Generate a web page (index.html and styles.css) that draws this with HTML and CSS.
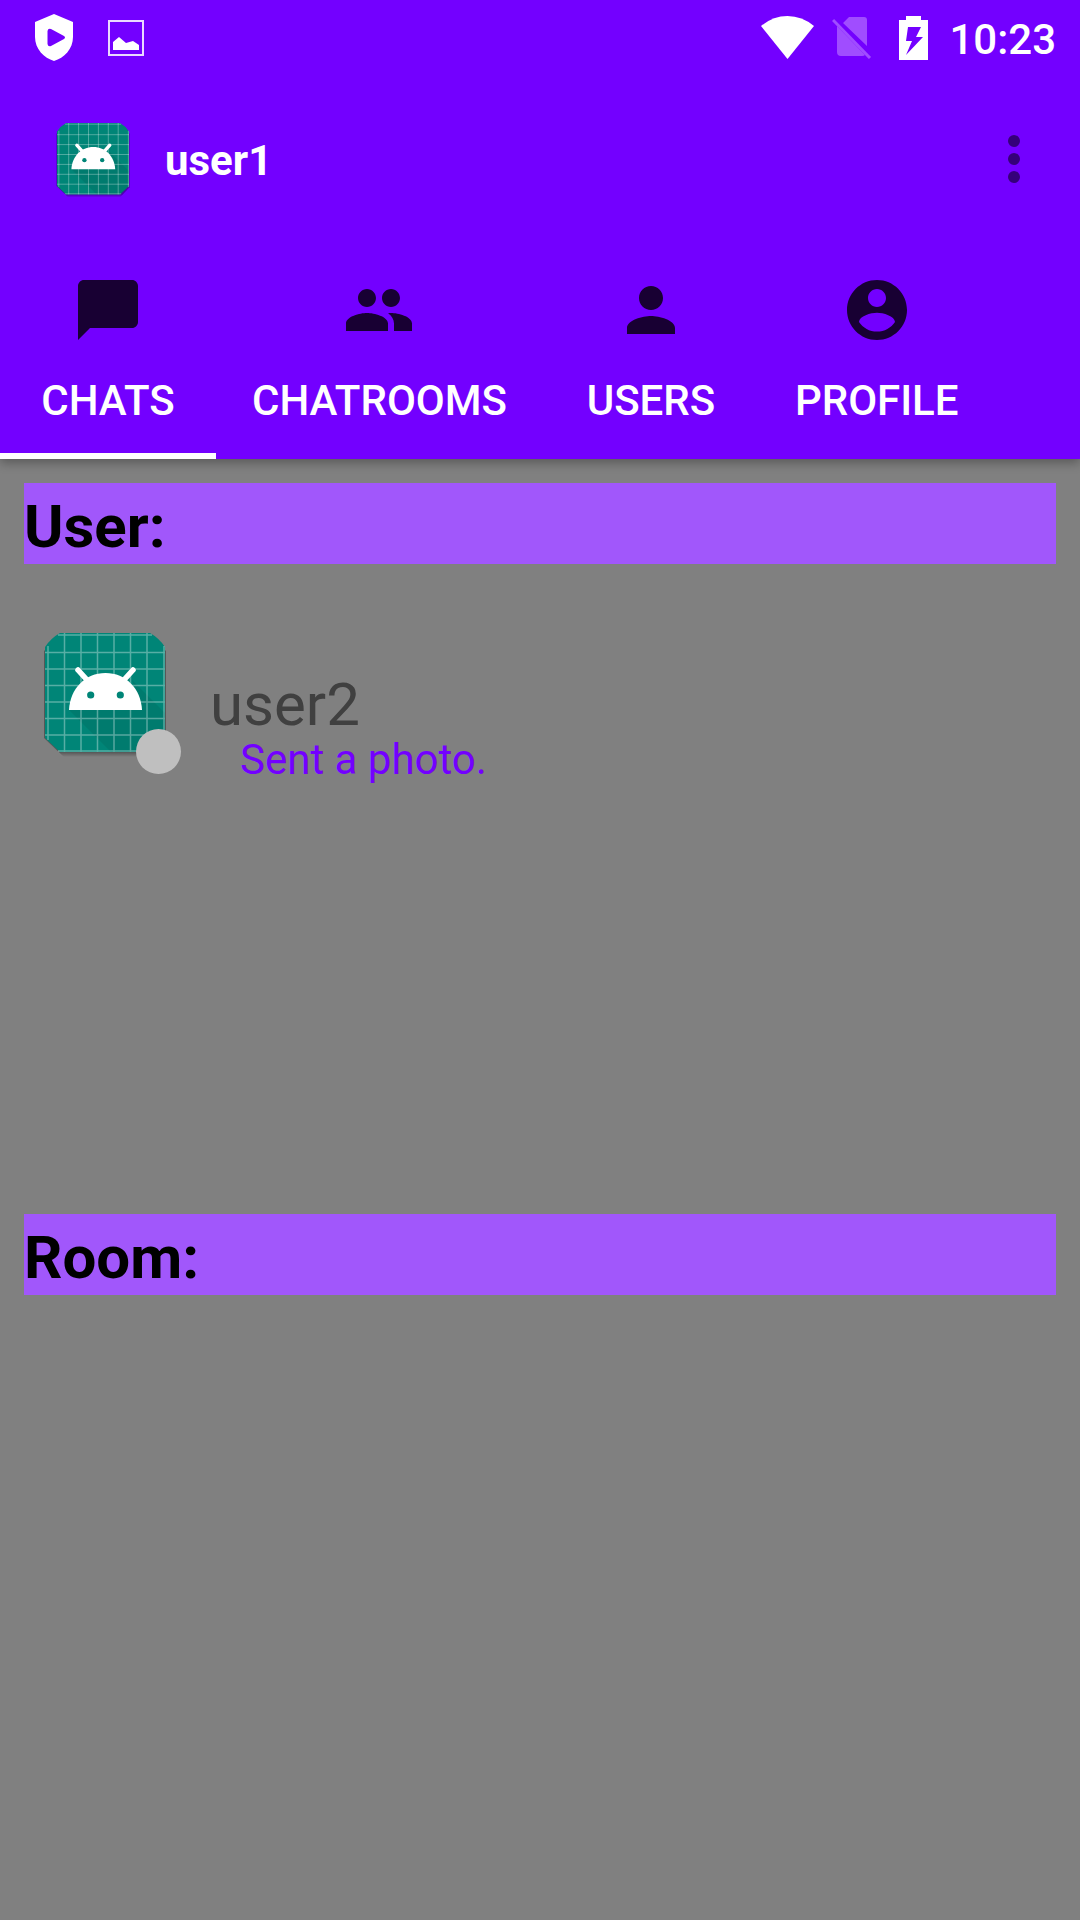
FILE: index.html
```html
<!DOCTYPE html>
<html lang="en">
<head>
<meta charset="utf-8">
<meta name="viewport" content="width=device-width, initial-scale=1">
<title>Chats</title>
<link rel="stylesheet" href="styles.css">
</head>
<body>
<svg class="defs" aria-hidden="true">
  <linearGradient id="edge" x1="0" y1="0" x2="0" y2="1"><stop offset=".96" stop-color="#000" stop-opacity=".32"/><stop offset="1" stop-color="#000" stop-opacity="0"/></linearGradient>
  <symbol id="launcher" viewBox="0 0 150 150">
    <path d="M30 18H120L136 33V122L120 139H34L14 120V33Z" fill="url(#edge)"/>
    <path d="M30 15H120Q129 20 135 29V120L120 134H30L15 120V29Q21 20 30 15Z" fill="#008577"/>
    <path d="M39 92L81 134H120L135 120V95L102 62L111 92Z" fill="#000" opacity=".07"/>
    <path d="M34.500 15V134M51 15V134M67.500 15V134M84 15V134M100.500 15V134M117 15V134M15 34.500H135M15 51H135M15 67.500H135M15 84H135M15 100.500H135M15 117H135M18 28V122M134 28V122M28 17H122M28 133H122" fill="none" stroke="#fff" stroke-opacity=".34" stroke-width="1.500"/>
    <path d="M39 92C40 71 55 55 75.500 55S111 71 112 92Z" fill="#fff"/>
    <path d="M48 52L58 63M103 52L93 63" stroke="#fff" stroke-width="5.500" stroke-linecap="round"/>
    <circle cx="60.700" cy="77" r="3.600" fill="#008577"/><circle cx="90.300" cy="77" r="3.600" fill="#008577"/>
  </symbol>
</svg>
<header class="app-header">
  <div class="status-bar">
    <svg class="status-shield" viewBox="0 0 38 47" aria-hidden="true"><path fill="#fff" fill-rule="evenodd" d="M19 0L38 8V23C38 35 29 44 19 47C9 44 0 35 0 23V8ZM12.500 17V30Q13 33 16 32L29 25Q31 23.500 29 22L16 15Q13 14 12.500 17Z"/></svg>
    <svg class="status-image" viewBox="0 0 36 36" aria-hidden="true"><rect x="1" y="1" width="34" height="34" fill="none" stroke="#fff" stroke-width="2" opacity=".85"/><path fill="#fff" d="M5 30V22L11 17L18 23L25 21L31 25V30Z"/></svg>
    <span class="spacer"></span>
    <svg class="status-wifi" viewBox="0 0 53 43" aria-hidden="true"><path fill="#fff" d="M0 10Q12 0 26.500 0T53 10L26.500 43Z"/></svg>
    <svg class="status-sim" viewBox="0 0 40 42" aria-hidden="true"><path fill="#a04dff" d="M11 6L17 0H32Q35 0 35 3V29ZM5 9L33 38Q32 39 30 39H9Q5 39 5 35Z"/><path stroke="#a04dff" stroke-width="3" d="M1 3L38 41"/></svg>
    <svg class="status-battery" viewBox="0 0 29 44" aria-hidden="true"><path fill="#fff" fill-rule="evenodd" d="M7 0H22V4H29V44H0V4H7ZM9 11L7 25H13L7 39L24 21H17L22 11Z"/></svg>
    <time class="clock">10:23</time>
  </div>
  <div class="toolbar">
    <svg class="avatar-small" role="img" aria-label="user1 avatar"><use href="#launcher"/></svg>
    <h1 class="account">user1</h1>
    <button class="menu" type="button" aria-label="More options"><svg viewBox="0 0 72 72"><g fill="#35007a"><circle cx="36" cy="18" r="6"/><circle cx="36" cy="36" r="6"/><circle cx="36" cy="54" r="6"/></g></svg></button>
  </div>
  <nav class="tabs">
    <a class="tab tab-active" href="#chats" aria-current="page"><svg viewBox="0 0 24 24"><path d="M20 2H4c-1.100 0-2 .9-2 2v18l4-4h14c1.100 0 2-.9 2-2V4c0-1.100-.9-2-2-2z"/></svg>CHATS</a>
    <a class="tab" href="#chatrooms"><svg viewBox="0 0 24 24"><path d="M16 11c1.660 0 2.990-1.340 2.990-3S17.660 5 16 5s-3 1.340-3 3 1.340 3 3 3zm-8 0c1.660 0 2.990-1.340 2.990-3S9.660 5 8 5 5 6.340 5 8s1.340 3 3 3zm0 2c-2.330 0-7 1.170-7 3.500V19h14v-2.500C15 14.170 10.330 13 8 13zm8 0c-.29 0-.62.020-.97.050C16.190 13.890 17 15.020 17 16.500V19h6v-2.500c0-2.330-4.670-3.500-7-3.500z"/></svg>CHATROOMS</a>
    <a class="tab" href="#users"><svg viewBox="0 0 24 24"><path d="M12 12c2.210 0 4-1.790 4-4s-1.790-4-4-4-4 1.790-4 4 1.790 4 4 4zm0 2c-2.670 0-8 1.340-8 4v2h16v-2c0-2.660-5.330-4-8-4z"/></svg>USERS</a>
    <a class="tab" href="#profile"><svg viewBox="0 0 24 24"><path d="M12 2C6.480 2 2 6.480 2 12s4.480 10 10 10 10-4.480 10-10S17.520 2 12 2zm0 3c1.660 0 3 1.340 3 3s-1.340 3-3 3-3-1.340-3-3 1.340-3 3-3zm0 14.200c-2.500 0-4.710-1.280-6-3.220.030-1.990 4-3.080 6-3.080 1.990 0 5.970 1.090 6 3.080-1.290 1.940-3.500 3.220-6 3.220z"/></svg>PROFILE</a>
  </nav>
</header>
<main class="content" id="chats">
  <section class="group">
    <h2 class="group-title">User:</h2>
    <a class="chat" href="#user2">
      <span class="chat-avatar"><svg role="img" aria-label="user2 avatar"><use href="#launcher"/></svg><span class="presence"></span></span>
      <span class="chat-text"><span class="chat-name">user2</span><span class="chat-message">Sent a photo.</span></span>
    </a>
  </section>
  <section class="group">
    <h2 class="group-title">Room:</h2>
  </section>
</main>
</body>
</html>
```
FILE: styles.css
```css
* { box-sizing: border-box; }
body {
  margin: 0;
  min-height: 100vh;
  display: flex;
  flex-direction: column;
  background: #808080;
  font-family: Roboto, "Liberation Sans", sans-serif;
}
svg { display: block; flex: none; }
a { color: inherit; text-decoration: none; }
.defs { position: absolute; width: 0; height: 0; }

.app-header {
  background: #7300ff;
  color: #fff;
  box-shadow: 0 4px 10px rgba(0, 0, 0, .3);
}
.status-bar {
  display: flex;
  align-items: center;
  height: 75px;
  padding: 0 24px 0 35px;
}
.spacer { flex: 1; }
.status-shield { width: 38px; height: 47px; }
.status-image { width: 36px; height: 36px; margin-left: 35px; }
.status-wifi { width: 53px; height: 43px; }
.status-sim { width: 40px; height: 42px; margin-left: 18px; }
.status-battery { width: 29px; height: 44px; margin: 0 21px 0 27px; }
.clock {
  padding-top: 4px;
  font-size: 42px;
  line-height: 48px;
  font-weight: 500;
}

.toolbar {
  display: flex;
  align-items: center;
  height: 168px;
  padding: 0 30px 0 48px;
}
.avatar-small { width: 90px; height: 90px; }
.account {
  flex: 1;
  margin: 0;
  padding: 4px 0 0 27px;
  font-size: 42px;
  line-height: 48px;
  font-weight: 700;
}
.menu {
  width: 72px;
  height: 72px;
  padding: 0;
  border: 0;
  background: none;
}

.tabs { display: flex; height: 216px; }
.tab {
  display: flex;
  flex-direction: column;
  align-items: center;
  gap: 31px;
  min-width: 216px;
  padding: 31px 36px 0;
  border-bottom: 6px solid transparent;
  font-size: 42px;
  line-height: 48px;
  font-weight: 500;
}
.tab-active { border-color: #fff; }
.tab svg { width: 72px; height: 72px; fill: #180033; }

.content { flex: 1; display: flex; flex-direction: column; }
.group { flex: 1 0 0; padding: 24px 24px 0; }
.group-title {
  margin: 0;
  padding-top: 6px;
  background: #a157fb;
  color: #000;
  font-size: 60px;
  line-height: 75px;
  font-weight: 700;
}
.chat {
  display: flex;
  gap: 30px;
  padding: 54px 6px 0;
}
.chat-avatar { position: relative; flex: none; width: 150px; height: 156px; }
.chat-avatar svg { width: 150px; height: 150px; }
.presence {
  position: absolute;
  left: 106px;
  bottom: 0;
  width: 45px;
  height: 45px;
  border-radius: 50%;
  background: #bfbfbf;
}
.chat-text { display: flex; flex-direction: column; padding-top: 54px; }
.chat-name { color: #404040; font-size: 60px; line-height: 66px; }
.chat-message {
  padding-left: 30px;
  color: #7300ff;
  font-size: 42px;
  line-height: 44px;
}
```
